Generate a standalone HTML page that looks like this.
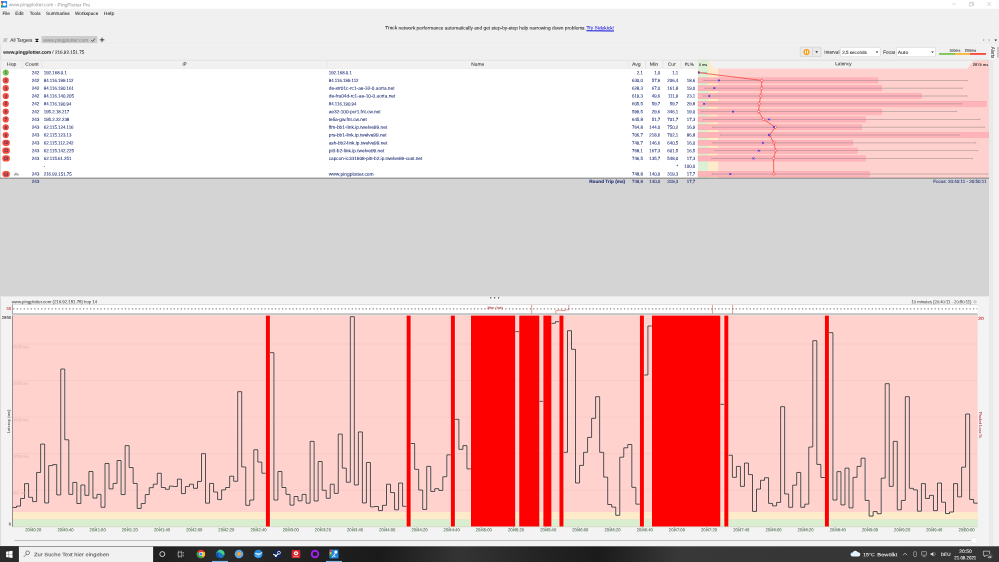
<!DOCTYPE html>
<html><head><meta charset="utf-8"><title>PingPlotter Pro</title><style>html,body{margin:0;padding:0}body{width:999px;height:562px;overflow:hidden;position:relative;background:#f0f0f0;font-family:"Liberation Sans",sans-serif}#tx{will-change:transform;opacity:.999}.t{position:absolute;left:0;top:0;-webkit-text-stroke:0.05px;white-space:nowrap;line-height:1;transform-origin:0 0;display:block}svg{position:absolute;left:0;top:0}</style></head><body>
<svg width="999" height="562" viewBox="0 0 999 562">
<rect x="0.00" y="0.00" width="999.00" height="562.00" fill="#f0f0f0" />
<rect x="0.00" y="0.00" width="999.00" height="8.70" fill="#ffffff" />
<rect x="1.00" y="1.10" width="6.10" height="6.40" fill="#1e88e5" />
<rect x="1.00" y="1.10" width="1.30" height="2.20" fill="#e53935" />
<rect x="1.00" y="3.30" width="1.30" height="2.10" fill="#fbc02d" />
<rect x="1.00" y="5.40" width="1.30" height="2.10" fill="#43a047" />
<circle cx="4.5" cy="4.3" r="1.75" fill="#fff"/>
<line x1="952.20" y1="4.10" x2="955.80" y2="4.10" stroke="#a8a8a8" stroke-width="0.45" />
<rect x="969.7" y="3" width="3" height="3" fill="none" stroke="#a8a8a8" stroke-width="0.45"/><path d="M970.6 3V2.2h3v3h-.9" fill="none" stroke="#a8a8a8" stroke-width="0.45"/>
<path d="M987.3 2l3.8 3.8M991.1 2l-3.8 3.8" stroke="#a8a8a8" stroke-width="0.45" fill="none"/>
<rect x="41.50" y="36.00" width="55.80" height="7.40" fill="#cdcdcd" />
<path d="M3.9 38.8h3.6M3.5 40h3.6M3.1 41.2h3.6" stroke="#8c8c8c" stroke-width="0.6"/>
<path d="M35.6 38.8l2.7 2.7M38.3 38.8l-2.7 2.7" stroke="#0a0a0a" stroke-width="1.1"/>
<path d="M91.3 40.2l1.3 1.3l2.3-2.9" stroke="#4a4a4a" stroke-width="0.95" fill="none"/>
<path d="M99.75 39.85h4.6M102.05 37.55v4.6" stroke="#0a0a0a" stroke-width="0.72"/>
<path d="M984.2 39l-1 1.1l1 1.1M988.6 39l1 1.1l-1 1.1" stroke="#858585" stroke-width="0.6" fill="none"/><path d="M994.4 39.6h2.8l-1.4 1.6z" fill="#333"/>
<rect x="0.00" y="43.30" width="999.00" height="0.90" fill="#fafafa" />
<line x1="0.00" y1="43.30" x2="999.00" y2="43.30" stroke="#dcdcdc" stroke-width="0.4" />
<rect x="0.00" y="44.20" width="1.20" height="16.00" fill="#e2e2e2" />
<rect x="800.3" y="47.3" width="20.7" height="9.2" rx="0.8" fill="#e9e9e9" stroke="#c4c4c4" stroke-width="0.45"/>
<line x1="812.50" y1="47.30" x2="812.50" y2="56.50" stroke="#c4c4c4" stroke-width="0.45" />
<circle cx="806.5" cy="52.1" r="3.1" fill="#f7a11a"/><path d="M805.5 50.5v3.2M807.5 50.5v3.2" stroke="#fff" stroke-width="0.8"/>
<path d="M815.4 51.3h2.6l-1.3 1.6z" fill="#222"/>
<rect x="840.4" y="47.4" width="39.9" height="9.3" rx="0.8" fill="#fff" stroke="#c9c9c9" stroke-width="0.45"/>
<path d="M875.7 51.5h2.6l-1.3 1.6z" fill="#222"/>
<rect x="896.5" y="47.4" width="39" height="9.3" rx="0.8" fill="#fff" stroke="#c9c9c9" stroke-width="0.45"/>
<path d="M931.2 51.5h2.6l-1.3 1.6z" fill="#222"/>
<rect x="939.00" y="53.00" width="16.00" height="1.90" fill="#80c656" />
<rect x="955.00" y="53.00" width="15.00" height="1.90" fill="#fab93e" />
<rect x="970.00" y="53.00" width="16.00" height="1.90" fill="#f5503f" />
<rect x="989.60" y="46.40" width="6.60" height="12.60" fill="#f8f8f8" />
<rect x="997.00" y="47.00" width="2.00" height="10.50" fill="#c8c8c8" />
<rect x="0.00" y="60.20" width="999.00" height="8.40" fill="#f1f1f1" />
<line x1="0.00" y1="60.20" x2="989.00" y2="60.20" stroke="#d6d6d6" stroke-width="0.5" />
<line x1="0.00" y1="68.50" x2="989.00" y2="68.50" stroke="#dadada" stroke-width="0.5" />
<rect x="0.00" y="68.60" width="698.00" height="109.40" fill="#ffffff" />
<rect x="0.00" y="68.60" width="1.20" height="109.40" fill="#dedede" />
<line x1="1.00" y1="60.60" x2="1.00" y2="68.30" stroke="#dcdcdc" stroke-width="0.5" />
<line x1="22.40" y1="60.60" x2="22.40" y2="68.30" stroke="#dcdcdc" stroke-width="0.5" />
<line x1="41.80" y1="60.60" x2="41.80" y2="68.30" stroke="#dcdcdc" stroke-width="0.5" />
<line x1="327.00" y1="60.60" x2="327.00" y2="68.30" stroke="#dcdcdc" stroke-width="0.5" />
<line x1="628.70" y1="60.60" x2="628.70" y2="68.30" stroke="#dcdcdc" stroke-width="0.5" />
<line x1="645.50" y1="60.60" x2="645.50" y2="68.30" stroke="#dcdcdc" stroke-width="0.5" />
<line x1="663.00" y1="60.60" x2="663.00" y2="68.30" stroke="#dcdcdc" stroke-width="0.5" />
<line x1="680.80" y1="60.60" x2="680.80" y2="68.30" stroke="#dcdcdc" stroke-width="0.5" />
<rect x="698.00" y="60.60" width="291.00" height="117.40" fill="#ffd1ce" />
<rect x="698.00" y="60.60" width="10.10" height="117.40" fill="#dbf0d4" />
<rect x="708.10" y="60.60" width="10.10" height="117.40" fill="#fdebc9" />
<path d="M708.3 60.6H973.5L967.2 68.5H714L708.3 60.6z" fill="#f1f1f1"/>
<line x1="698.00" y1="60.20" x2="989.00" y2="60.20" stroke="#d6d6d6" stroke-width="0.5" />
<rect x="698.00" y="77.81" width="179.92" height="5.2" fill="#ffb4bc" stroke="#fb9f9c" stroke-width="0.4"/>
<rect x="698.00" y="85.61" width="183.79" height="5.2" fill="#ffb4bc" stroke="#fb9f9c" stroke-width="0.4"/>
<rect x="698.00" y="93.41" width="223.45" height="5.2" fill="#ffb4bc" stroke="#fb9f9c" stroke-width="0.4"/>
<rect x="698.00" y="101.22" width="288.27" height="5.2" fill="#ffb4bc" stroke="#fb9f9c" stroke-width="0.4"/>
<rect x="698.00" y="109.03" width="183.79" height="5.2" fill="#ffb4bc" stroke="#fb9f9c" stroke-width="0.4"/>
<rect x="698.00" y="116.83" width="167.35" height="5.2" fill="#ffb4bc" stroke="#fb9f9c" stroke-width="0.4"/>
<rect x="698.00" y="124.63" width="163.48" height="5.2" fill="#ffb4bc" stroke="#fb9f9c" stroke-width="0.4"/>
<rect x="698.00" y="132.44" width="291.00" height="5.2" fill="#ffb4bc" stroke="#fb9f9c" stroke-width="0.4"/>
<rect x="698.00" y="140.25" width="154.77" height="5.2" fill="#ffb4bc" stroke="#fb9f9c" stroke-width="0.4"/>
<rect x="698.00" y="148.05" width="159.61" height="5.2" fill="#ffb4bc" stroke="#fb9f9c" stroke-width="0.4"/>
<rect x="698.00" y="155.85" width="167.35" height="5.2" fill="#ffb4bc" stroke="#fb9f9c" stroke-width="0.4"/>
<rect x="698.00" y="171.47" width="171.22" height="5.2" fill="#ffb4bc" stroke="#fb9f9c" stroke-width="0.4"/>
<circle cx="5.75" cy="72.60" r="3.1" fill="#7ec658"/>
<line x1="698.10" y1="72.60" x2="706.30" y2="72.60" stroke="#857878" stroke-width="0.5" opacity="0.9"/>
<line x1="698.10" y1="71.90" x2="698.10" y2="73.30" stroke="#7d7d7d" stroke-width="0.45" opacity="0.8"/>
<line x1="706.30" y1="71.90" x2="706.30" y2="73.30" stroke="#7d7d7d" stroke-width="0.45" opacity="0.8"/>
<circle cx="5.75" cy="80.41" r="3.1" fill="#f24f3d"/>
<line x1="703.86" y1="80.41" x2="967.40" y2="80.41" stroke="#857878" stroke-width="0.5" opacity="0.9"/>
<line x1="703.86" y1="79.70" x2="703.86" y2="81.11" stroke="#7d7d7d" stroke-width="0.45" opacity="0.8"/>
<line x1="967.40" y1="79.70" x2="967.40" y2="81.11" stroke="#7d7d7d" stroke-width="0.45" opacity="0.8"/>
<circle cx="5.75" cy="88.21" r="3.1" fill="#f24f3d"/>
<line x1="704.78" y1="88.21" x2="962.60" y2="88.21" stroke="#857878" stroke-width="0.5" opacity="0.9"/>
<line x1="704.78" y1="87.51" x2="704.78" y2="88.91" stroke="#7d7d7d" stroke-width="0.45" opacity="0.8"/>
<line x1="962.60" y1="87.51" x2="962.60" y2="88.91" stroke="#7d7d7d" stroke-width="0.45" opacity="0.8"/>
<circle cx="5.75" cy="96.01" r="3.1" fill="#f24f3d"/>
<line x1="703.02" y1="96.01" x2="967.00" y2="96.01" stroke="#857878" stroke-width="0.5" opacity="0.9"/>
<line x1="703.02" y1="95.31" x2="703.02" y2="96.71" stroke="#7d7d7d" stroke-width="0.45" opacity="0.8"/>
<line x1="967.00" y1="95.31" x2="967.00" y2="96.71" stroke="#7d7d7d" stroke-width="0.45" opacity="0.8"/>
<circle cx="5.75" cy="103.82" r="3.1" fill="#f24f3d"/>
<line x1="704.04" y1="103.82" x2="961.90" y2="103.82" stroke="#857878" stroke-width="0.5" opacity="0.9"/>
<line x1="704.04" y1="103.12" x2="704.04" y2="104.52" stroke="#7d7d7d" stroke-width="0.45" opacity="0.8"/>
<line x1="961.90" y1="103.12" x2="961.90" y2="104.52" stroke="#7d7d7d" stroke-width="0.45" opacity="0.8"/>
<circle cx="5.75" cy="111.62" r="3.1" fill="#f24f3d"/>
<line x1="701.00" y1="111.62" x2="956.60" y2="111.62" stroke="#857878" stroke-width="0.5" opacity="0.9"/>
<line x1="701.00" y1="110.92" x2="701.00" y2="112.33" stroke="#7d7d7d" stroke-width="0.45" opacity="0.8"/>
<line x1="956.60" y1="110.92" x2="956.60" y2="112.33" stroke="#7d7d7d" stroke-width="0.45" opacity="0.8"/>
<circle cx="5.75" cy="119.43" r="3.1" fill="#f24f3d"/>
<line x1="703.23" y1="119.43" x2="980.00" y2="119.43" stroke="#857878" stroke-width="0.5" opacity="0.9"/>
<line x1="703.23" y1="118.73" x2="703.23" y2="120.13" stroke="#7d7d7d" stroke-width="0.45" opacity="0.8"/>
<line x1="980.00" y1="118.73" x2="980.00" y2="120.13" stroke="#7d7d7d" stroke-width="0.45" opacity="0.8"/>
<circle cx="5.75" cy="127.23" r="3.1" fill="#f24f3d"/>
<line x1="712.58" y1="127.23" x2="984.70" y2="127.23" stroke="#857878" stroke-width="0.5" opacity="0.9"/>
<line x1="712.58" y1="126.53" x2="712.58" y2="127.93" stroke="#7d7d7d" stroke-width="0.45" opacity="0.8"/>
<line x1="984.70" y1="126.53" x2="984.70" y2="127.93" stroke="#7d7d7d" stroke-width="0.45" opacity="0.8"/>
<circle cx="5.75" cy="135.04" r="3.1" fill="#f24f3d"/>
<line x1="720.13" y1="135.04" x2="959.00" y2="135.04" stroke="#857878" stroke-width="0.5" opacity="0.9"/>
<line x1="720.13" y1="134.34" x2="720.13" y2="135.74" stroke="#7d7d7d" stroke-width="0.45" opacity="0.8"/>
<line x1="959.00" y1="134.34" x2="959.00" y2="135.74" stroke="#7d7d7d" stroke-width="0.45" opacity="0.8"/>
<rect x="2.3" y="139.75" width="7.6" height="6.2" rx="3.1" fill="#f24f3d"/>
<line x1="712.84" y1="142.84" x2="975.80" y2="142.84" stroke="#857878" stroke-width="0.5" opacity="0.9"/>
<line x1="712.84" y1="142.15" x2="712.84" y2="143.54" stroke="#7d7d7d" stroke-width="0.45" opacity="0.8"/>
<line x1="975.80" y1="142.15" x2="975.80" y2="143.54" stroke="#7d7d7d" stroke-width="0.45" opacity="0.8"/>
<rect x="2.3" y="147.55" width="7.6" height="6.2" rx="3.1" fill="#f24f3d"/>
<line x1="714.93" y1="150.65" x2="977.50" y2="150.65" stroke="#857878" stroke-width="0.5" opacity="0.9"/>
<line x1="714.93" y1="149.95" x2="714.93" y2="151.35" stroke="#7d7d7d" stroke-width="0.45" opacity="0.8"/>
<line x1="977.50" y1="149.95" x2="977.50" y2="151.35" stroke="#7d7d7d" stroke-width="0.45" opacity="0.8"/>
<rect x="2.3" y="155.35" width="7.6" height="6.2" rx="3.1" fill="#f24f3d"/>
<line x1="711.74" y1="158.45" x2="972.70" y2="158.45" stroke="#857878" stroke-width="0.5" opacity="0.9"/>
<line x1="711.74" y1="157.75" x2="711.74" y2="159.15" stroke="#7d7d7d" stroke-width="0.45" opacity="0.8"/>
<line x1="972.70" y1="157.75" x2="972.70" y2="159.15" stroke="#7d7d7d" stroke-width="0.45" opacity="0.8"/>
<rect x="2.3" y="170.97" width="7.6" height="6.2" rx="3.1" fill="#f24f3d"/>
<line x1="712.17" y1="174.06" x2="987.80" y2="174.06" stroke="#857878" stroke-width="0.5" opacity="0.9"/>
<line x1="712.17" y1="173.37" x2="712.17" y2="174.76" stroke="#7d7d7d" stroke-width="0.45" opacity="0.8"/>
<line x1="987.80" y1="173.37" x2="987.80" y2="174.76" stroke="#7d7d7d" stroke-width="0.45" opacity="0.8"/>
<polyline points="698.21,72.60 761.77,80.41 761.59,88.21 760.68,96.01 759.29,103.82 758.68,111.62 763.37,119.43 775.41,127.23 769.53,135.04 773.88,142.84 775.75,150.65 773.56,158.45 773.79,174.06" fill="none" stroke="#f4504a" stroke-width="0.85" stroke-linejoin="round"/>
<rect x="698.1" y="71.75" width="1.7" height="1.7" fill="#2b45e8" stroke="#e84040" stroke-width="0.35"/>
<circle cx="761.77" cy="80.41" r="1.2" fill="#ffe3e1" stroke="#ee2f2f" stroke-width="0.55"/>
<rect x="718.29" y="79.81" width="1.2" height="1.2" fill="#2a22e0"/><path d="M717.84 79.36l2.1 2.1M719.94 79.36l-2.1 2.1" stroke="#3a30e6" stroke-width="0.6"/>
<circle cx="761.59" cy="88.21" r="1.2" fill="#ffe3e1" stroke="#ee2f2f" stroke-width="0.55"/>
<rect x="713.78" y="87.61" width="1.2" height="1.2" fill="#2a22e0"/><path d="M713.33 87.16l2.1 2.1M715.43 87.16l-2.1 2.1" stroke="#3a30e6" stroke-width="0.6"/>
<circle cx="760.68" cy="96.01" r="1.2" fill="#ffe3e1" stroke="#ee2f2f" stroke-width="0.55"/>
<rect x="708.73" y="95.41" width="1.2" height="1.2" fill="#2a22e0"/><path d="M708.28 94.96l2.1 2.1M710.38 94.96l-2.1 2.1" stroke="#3a30e6" stroke-width="0.6"/>
<circle cx="759.29" cy="103.82" r="1.2" fill="#ffe3e1" stroke="#ee2f2f" stroke-width="0.55"/>
<rect x="703.44" y="103.22" width="1.2" height="1.2" fill="#2a22e0"/><path d="M702.99 102.77l2.1 2.1M705.09 102.77l-2.1 2.1" stroke="#3a30e6" stroke-width="0.6"/>
<circle cx="758.68" cy="111.62" r="1.2" fill="#ffe3e1" stroke="#ee2f2f" stroke-width="0.55"/>
<rect x="732.43" y="111.03" width="1.2" height="1.2" fill="#2a22e0"/><path d="M731.98 110.58l2.1 2.1M734.08 110.58l-2.1 2.1" stroke="#3a30e6" stroke-width="0.6"/>
<circle cx="763.37" cy="119.43" r="1.2" fill="#ffe3e1" stroke="#ee2f2f" stroke-width="0.55"/>
<rect x="768.42" y="118.83" width="1.2" height="1.2" fill="#2a22e0"/><path d="M767.97 118.38l2.1 2.1M770.07 118.38l-2.1 2.1" stroke="#3a30e6" stroke-width="0.6"/>
<circle cx="775.41" cy="127.23" r="1.2" fill="#ffe3e1" stroke="#ee2f2f" stroke-width="0.55"/>
<rect x="773.33" y="126.63" width="1.2" height="1.2" fill="#2a22e0"/><path d="M772.88 126.18l2.1 2.1M774.98 126.18l-2.1 2.1" stroke="#3a30e6" stroke-width="0.6"/>
<circle cx="769.53" cy="135.04" r="1.2" fill="#ffe3e1" stroke="#ee2f2f" stroke-width="0.55"/>
<rect x="768.46" y="134.44" width="1.2" height="1.2" fill="#2a22e0"/><path d="M768.01 133.99l2.1 2.1M770.11 133.99l-2.1 2.1" stroke="#3a30e6" stroke-width="0.6"/>
<circle cx="773.88" cy="142.84" r="1.2" fill="#ffe3e1" stroke="#ee2f2f" stroke-width="0.55"/>
<rect x="762.23" y="142.25" width="1.2" height="1.2" fill="#2a22e0"/><path d="M761.78 141.79l2.1 2.1M763.88 141.79l-2.1 2.1" stroke="#3a30e6" stroke-width="0.6"/>
<circle cx="775.75" cy="150.65" r="1.2" fill="#ffe3e1" stroke="#ee2f2f" stroke-width="0.55"/>
<rect x="758.28" y="150.05" width="1.2" height="1.2" fill="#2a22e0"/><path d="M757.83 149.60l2.1 2.1M759.93 149.60l-2.1 2.1" stroke="#3a30e6" stroke-width="0.6"/>
<circle cx="773.56" cy="158.45" r="1.2" fill="#ffe3e1" stroke="#ee2f2f" stroke-width="0.55"/>
<rect x="752.87" y="157.85" width="1.2" height="1.2" fill="#2a22e0"/><path d="M752.42 157.40l2.1 2.1M754.52 157.40l-2.1 2.1" stroke="#3a30e6" stroke-width="0.6"/>
<circle cx="773.79" cy="174.06" r="1.2" fill="#ffe3e1" stroke="#ee2f2f" stroke-width="0.55"/>
<rect x="729.72" y="173.47" width="1.2" height="1.2" fill="#2a22e0"/><path d="M729.27 173.01l2.1 2.1M731.37 173.01l-2.1 2.1" stroke="#3a30e6" stroke-width="0.6"/>
<path d="M14.6 175.37v-1.4M15.9 175.37v-2.8M17.2 175.37v-2M18.4 175.37v-1" stroke="#666" stroke-width="0.8"/>
<rect x="0.00" y="178.00" width="989.00" height="118.00" fill="#d4d4d4" />
<line x1="0.00" y1="178.15" x2="989.00" y2="178.15" stroke="#646464" stroke-width="0.8" />
<rect x="989.00" y="60.40" width="10.00" height="486.00" fill="#eaeaea" />
<rect x="993.50" y="60.40" width="5.50" height="486.00" fill="#f2f2f2" />
<rect x="0.00" y="296.00" width="989.00" height="1.30" fill="#e6e6e6" />
<rect x="0.00" y="296.90" width="989.00" height="249.50" fill="#f3f3f3" />
<rect x="0.00" y="296.90" width="1.10" height="249.50" fill="#dcdcdc" />
<rect x="490.10" y="297.20" width="1.20" height="1.20" fill="#444" />
<rect x="494.00" y="297.20" width="1.20" height="1.20" fill="#444" />
<rect x="498.00" y="297.20" width="1.20" height="1.20" fill="#444" />
<circle cx="975" cy="301.8" r="1.5" fill="#e4e4e4" stroke="#aaa" stroke-width="0.3"/><path d="M974.2 301.5l.8 .8l.8-.8" stroke="#666" stroke-width="0.35" fill="none"/>
<rect x="12.50" y="304.60" width="965.20" height="9.30" fill="#ffffff" />
<line x1="12.50" y1="304.50" x2="977.70" y2="304.50" stroke="#c4c4c4" stroke-width="0.5" />
<line x1="12.50" y1="314.00" x2="977.70" y2="314.00" stroke="#7a7a7a" stroke-width="0.75" />
<line x1="12.50" y1="304.40" x2="12.50" y2="314.30" stroke="#6a6a6a" stroke-width="0.6" />
<line x1="13.2" y1="308.8" x2="977.2" y2="308.8" stroke="#868686" stroke-width="1.15" stroke-dasharray="1.25 2.24"/>
<line x1="531.70" y1="305.00" x2="531.70" y2="313.70" stroke="#c83a3a" stroke-width="0.5" />
<line x1="712.40" y1="305.00" x2="712.40" y2="313.70" stroke="#c83a3a" stroke-width="0.5" />
<line x1="732.60" y1="305.00" x2="732.60" y2="313.70" stroke="#c83a3a" stroke-width="0.5" />
<path d="M555.8 313.7V310.6h2.6v-.5h3.2v.4h3.4v-.6h3.8V305" fill="none" stroke="#c83a3a" stroke-width="0.5"/>
<rect x="12.50" y="315.60" width="965.20" height="211.00" fill="#ffd2ce" />
<rect x="12.50" y="512.00" width="965.20" height="7.30" fill="#fdebca" />
<rect x="12.50" y="519.30" width="965.20" height="7.30" fill="#d9eed0" />
<line x1="12.50" y1="315.30" x2="977.70" y2="315.30" stroke="#e6c8c6" stroke-width="0.5" />
<line x1="12.50" y1="490.09" x2="977.70" y2="490.09" stroke="#eebfbb" stroke-width="0.4" />
<line x1="12.50" y1="453.59" x2="977.70" y2="453.59" stroke="#eebfbb" stroke-width="0.4" />
<line x1="12.50" y1="417.08" x2="977.70" y2="417.08" stroke="#eebfbb" stroke-width="0.4" />
<line x1="12.50" y1="380.58" x2="977.70" y2="380.58" stroke="#eebfbb" stroke-width="0.4" />
<line x1="12.50" y1="344.07" x2="977.70" y2="344.07" stroke="#eebfbb" stroke-width="0.4" />
<rect x="265.17" y="315.60" width="5.42" height="211.00" fill="#ffffff" opacity="0.55"/>
<rect x="265.87" y="315.60" width="4.02" height="211.00" fill="#fe0000" />
<rect x="405.92" y="315.60" width="5.42" height="211.00" fill="#ffffff" opacity="0.55"/>
<rect x="406.62" y="315.60" width="4.02" height="211.00" fill="#fe0000" />
<rect x="450.16" y="315.60" width="5.42" height="211.00" fill="#ffffff" opacity="0.55"/>
<rect x="450.86" y="315.60" width="4.02" height="211.00" fill="#fe0000" />
<rect x="470.27" y="315.60" width="45.64" height="211.00" fill="#ffffff" opacity="0.55"/>
<rect x="470.97" y="315.60" width="44.24" height="211.00" fill="#fe0000" />
<rect x="518.53" y="315.60" width="21.51" height="211.00" fill="#ffffff" opacity="0.55"/>
<rect x="519.23" y="315.60" width="20.11" height="211.00" fill="#fe0000" />
<rect x="542.66" y="315.60" width="9.44" height="211.00" fill="#ffffff" opacity="0.55"/>
<rect x="543.36" y="315.60" width="8.04" height="211.00" fill="#fe0000" />
<rect x="558.75" y="315.60" width="5.42" height="211.00" fill="#ffffff" opacity="0.55"/>
<rect x="559.45" y="315.60" width="4.02" height="211.00" fill="#fe0000" />
<rect x="639.18" y="315.60" width="5.42" height="211.00" fill="#ffffff" opacity="0.55"/>
<rect x="639.88" y="315.60" width="4.02" height="211.00" fill="#fe0000" />
<rect x="651.24" y="315.60" width="69.77" height="211.00" fill="#ffffff" opacity="0.55"/>
<rect x="651.94" y="315.60" width="68.37" height="211.00" fill="#fe0000" />
<rect x="723.63" y="315.60" width="5.42" height="211.00" fill="#ffffff" opacity="0.55"/>
<rect x="724.33" y="315.60" width="4.02" height="211.00" fill="#fe0000" />
<rect x="824.18" y="315.60" width="5.42" height="211.00" fill="#ffffff" opacity="0.55"/>
<rect x="824.88" y="315.60" width="4.02" height="211.00" fill="#fe0000" />
<path d="M12.50 507.48 L16.52 507.48 L16.52 506.11 L20.54 506.11 L20.54 498.47 L24.56 498.47 L24.56 483.60 L28.59 483.60 L28.59 497.30 L32.61 497.30 L32.61 501.60 L36.63 501.60 L36.63 472.45 L40.65 472.45 L40.65 444.07 L44.67 444.07 L44.67 502.97 L48.70 502.97 L48.70 465.60 L52.72 465.60 L52.72 464.62 L56.74 464.62 L56.74 494.95 L60.76 494.95 L60.76 369.00 L64.78 369.00 L64.78 439.77 L68.80 439.77 L68.80 494.36 L72.82 494.36 L72.82 482.43 L76.85 482.43 L76.85 503.56 L80.87 503.56 L80.87 484.97 L84.89 484.97 L84.89 495.34 L88.91 495.34 L88.91 471.47 L92.93 471.47 L92.93 498.08 L96.95 498.08 L96.95 494.36 L100.98 494.36 L100.98 507.28 L105.00 507.28 L105.00 463.44 L109.02 463.44 L109.02 488.88 L113.04 488.88 L113.04 483.41 L117.06 483.41 L117.06 460.51 L121.08 460.51 L121.08 494.56 L125.11 494.56 L125.11 445.64 L129.13 445.64 L129.13 467.55 L133.15 467.55 L133.15 483.41 L137.17 483.41 L137.17 508.45 L141.19 508.45 L141.19 503.56 L145.22 503.56 L145.22 494.56 L149.24 494.56 L149.24 487.71 L153.26 487.71 L153.26 484.19 L157.28 484.19 L157.28 473.23 L161.30 473.23 L161.30 487.51 L165.32 487.51 L165.32 489.28 L169.34 489.28 L169.34 486.14 L173.37 486.14 L173.37 486.54 L177.39 486.54 L177.39 479.10 L181.41 479.10 L181.41 493.58 L185.43 493.58 L185.43 486.54 L189.45 486.54 L189.45 484.19 L193.47 484.19 L193.47 488.30 L197.50 488.30 L197.50 481.45 L201.52 481.45 L201.52 453.66 L205.54 453.66 L205.54 503.17 L209.56 503.17 L209.56 483.41 L213.58 483.41 L213.58 492.02 L217.60 492.02 L217.60 499.65 L221.63 499.65 L221.63 489.86 L225.65 489.86 L225.65 487.51 L229.67 487.51 L229.67 476.16 L233.69 476.16 L233.69 481.25 L237.71 481.25 L237.71 391.70 L241.73 391.70 L241.73 466.97 L245.76 466.97 L245.76 505.32 L249.78 505.32 L249.78 500.04 L253.80 500.04 L253.80 449.75 L257.82 449.75 L257.82 462.07 L261.84 462.07 L261.84 473.23 L265.87 473.23" fill="none" stroke="#fff" stroke-width="1.5" stroke-opacity="0.5" stroke-linejoin="miter"/>
<path d="M12.50 507.48 L16.52 507.48 L16.52 506.11 L20.54 506.11 L20.54 498.47 L24.56 498.47 L24.56 483.60 L28.59 483.60 L28.59 497.30 L32.61 497.30 L32.61 501.60 L36.63 501.60 L36.63 472.45 L40.65 472.45 L40.65 444.07 L44.67 444.07 L44.67 502.97 L48.70 502.97 L48.70 465.60 L52.72 465.60 L52.72 464.62 L56.74 464.62 L56.74 494.95 L60.76 494.95 L60.76 369.00 L64.78 369.00 L64.78 439.77 L68.80 439.77 L68.80 494.36 L72.82 494.36 L72.82 482.43 L76.85 482.43 L76.85 503.56 L80.87 503.56 L80.87 484.97 L84.89 484.97 L84.89 495.34 L88.91 495.34 L88.91 471.47 L92.93 471.47 L92.93 498.08 L96.95 498.08 L96.95 494.36 L100.98 494.36 L100.98 507.28 L105.00 507.28 L105.00 463.44 L109.02 463.44 L109.02 488.88 L113.04 488.88 L113.04 483.41 L117.06 483.41 L117.06 460.51 L121.08 460.51 L121.08 494.56 L125.11 494.56 L125.11 445.64 L129.13 445.64 L129.13 467.55 L133.15 467.55 L133.15 483.41 L137.17 483.41 L137.17 508.45 L141.19 508.45 L141.19 503.56 L145.22 503.56 L145.22 494.56 L149.24 494.56 L149.24 487.71 L153.26 487.71 L153.26 484.19 L157.28 484.19 L157.28 473.23 L161.30 473.23 L161.30 487.51 L165.32 487.51 L165.32 489.28 L169.34 489.28 L169.34 486.14 L173.37 486.14 L173.37 486.54 L177.39 486.54 L177.39 479.10 L181.41 479.10 L181.41 493.58 L185.43 493.58 L185.43 486.54 L189.45 486.54 L189.45 484.19 L193.47 484.19 L193.47 488.30 L197.50 488.30 L197.50 481.45 L201.52 481.45 L201.52 453.66 L205.54 453.66 L205.54 503.17 L209.56 503.17 L209.56 483.41 L213.58 483.41 L213.58 492.02 L217.60 492.02 L217.60 499.65 L221.63 499.65 L221.63 489.86 L225.65 489.86 L225.65 487.51 L229.67 487.51 L229.67 476.16 L233.69 476.16 L233.69 481.25 L237.71 481.25 L237.71 391.70 L241.73 391.70 L241.73 466.97 L245.76 466.97 L245.76 505.32 L249.78 505.32 L249.78 500.04 L253.80 500.04 L253.80 449.75 L257.82 449.75 L257.82 462.07 L261.84 462.07 L261.84 473.23 L265.87 473.23" fill="none" stroke="#1e1919" stroke-width="0.78" stroke-linejoin="miter"/>
<path d="M269.89 352.70 L273.91 352.70 L273.91 500.04 L277.93 500.04 L277.93 471.47 L281.95 471.47 L281.95 487.51 L285.97 487.51 L285.97 494.36 L289.99 494.36 L290.00 505.13 L294.02 505.13 L294.02 496.52 L298.04 496.52 L298.04 500.82 L302.06 500.82 L302.06 494.36 L306.08 494.36 L306.08 503.17 L310.10 503.17 L310.10 441.33 L314.12 441.33 L314.12 501.02 L318.15 501.02 L318.15 461.49 L322.17 461.49 L322.17 490.25 L326.19 490.25 L326.19 498.28 L330.21 498.28 L330.21 484.19 L334.23 484.19 L334.23 493.39 L338.25 493.39 L338.25 434.09 L342.28 434.09 L342.28 468.14 L346.30 468.14 L346.30 482.23 L350.32 482.23 L350.32 316.70 L354.34 316.70 L354.34 484.97 L358.36 484.97 L358.36 431.94 L362.38 431.94 L362.38 502.97 L366.41 502.97 L366.41 462.47 L370.43 462.47 L370.43 506.89 L374.45 506.89 L374.45 506.50 L378.47 506.50 L378.47 510.61 L382.49 510.61 L382.49 505.32 L386.51 505.32 L386.51 484.19 L390.54 484.19 L390.54 492.60 L394.56 492.60 L394.56 509.82 L398.58 509.82 L398.58 483.01 L402.60 483.01 L402.60 506.30 L406.62 506.30" fill="none" stroke="#fff" stroke-width="1.5" stroke-opacity="0.5" stroke-linejoin="miter"/>
<path d="M269.89 352.70 L273.91 352.70 L273.91 500.04 L277.93 500.04 L277.93 471.47 L281.95 471.47 L281.95 487.51 L285.97 487.51 L285.97 494.36 L289.99 494.36 L290.00 505.13 L294.02 505.13 L294.02 496.52 L298.04 496.52 L298.04 500.82 L302.06 500.82 L302.06 494.36 L306.08 494.36 L306.08 503.17 L310.10 503.17 L310.10 441.33 L314.12 441.33 L314.12 501.02 L318.15 501.02 L318.15 461.49 L322.17 461.49 L322.17 490.25 L326.19 490.25 L326.19 498.28 L330.21 498.28 L330.21 484.19 L334.23 484.19 L334.23 493.39 L338.25 493.39 L338.25 434.09 L342.28 434.09 L342.28 468.14 L346.30 468.14 L346.30 482.23 L350.32 482.23 L350.32 316.70 L354.34 316.70 L354.34 484.97 L358.36 484.97 L358.36 431.94 L362.38 431.94 L362.38 502.97 L366.41 502.97 L366.41 462.47 L370.43 462.47 L370.43 506.89 L374.45 506.89 L374.45 506.50 L378.47 506.50 L378.47 510.61 L382.49 510.61 L382.49 505.32 L386.51 505.32 L386.51 484.19 L390.54 484.19 L390.54 492.60 L394.56 492.60 L394.56 509.82 L398.58 509.82 L398.58 483.01 L402.60 483.01 L402.60 506.30 L406.62 506.30" fill="none" stroke="#1e1919" stroke-width="0.78" stroke-linejoin="miter"/>
<path d="M410.64 443.48 L414.67 443.48 L414.67 469.32 L418.69 469.32 L418.69 490.06 L422.71 490.06 L422.71 509.43 L426.73 509.43 L426.73 466.38 L430.75 466.38 L430.75 491.43 L434.77 491.43 L434.77 488.69 L438.80 488.69 L438.80 490.45 L442.82 490.45 L442.82 476.75 L446.84 476.75 L446.84 454.83 L450.86 454.83" fill="none" stroke="#fff" stroke-width="1.5" stroke-opacity="0.5" stroke-linejoin="miter"/>
<path d="M410.64 443.48 L414.67 443.48 L414.67 469.32 L418.69 469.32 L418.69 490.06 L422.71 490.06 L422.71 509.43 L426.73 509.43 L426.73 466.38 L430.75 466.38 L430.75 491.43 L434.77 491.43 L434.77 488.69 L438.80 488.69 L438.80 490.45 L442.82 490.45 L442.82 476.75 L446.84 476.75 L446.84 454.83 L450.86 454.83" fill="none" stroke="#1e1919" stroke-width="0.78" stroke-linejoin="miter"/>
<path d="M454.88 419.30 L458.90 419.30 L458.90 449.35 L462.93 449.35 L462.93 445.64 L466.95 445.64 L466.95 468.92 L470.97 468.92" fill="none" stroke="#fff" stroke-width="1.5" stroke-opacity="0.5" stroke-linejoin="miter"/>
<path d="M454.88 419.30 L458.90 419.30 L458.90 449.35 L462.93 449.35 L462.93 445.64 L466.95 445.64 L466.95 468.92 L470.97 468.92" fill="none" stroke="#1e1919" stroke-width="0.78" stroke-linejoin="miter"/>
<path d="M515.21 331.70 L519.23 331.70" fill="none" stroke="#fff" stroke-width="1.5" stroke-opacity="0.5" stroke-linejoin="miter"/>
<path d="M515.21 331.70 L519.23 331.70" fill="none" stroke="#1e1919" stroke-width="0.78" stroke-linejoin="miter"/>
<path d="M539.34 401.30 L543.36 401.30" fill="none" stroke="#fff" stroke-width="1.5" stroke-opacity="0.5" stroke-linejoin="miter"/>
<path d="M539.34 401.30 L543.36 401.30" fill="none" stroke="#1e1919" stroke-width="0.78" stroke-linejoin="miter"/>
<path d="M551.40 323.30 L555.42 323.30 L555.42 321.70 L559.45 321.70" fill="none" stroke="#fff" stroke-width="1.5" stroke-opacity="0.5" stroke-linejoin="miter"/>
<path d="M551.40 323.30 L555.42 323.30 L555.42 321.70 L559.45 321.70" fill="none" stroke="#1e1919" stroke-width="0.78" stroke-linejoin="miter"/>
<path d="M563.47 452.29 L567.49 452.29 L567.49 330.70 L571.51 330.70 L571.51 349.30 L575.53 349.30 L575.53 483.01 L579.55 483.01 L579.55 465.40 L583.58 465.40 L583.58 452.29 L587.60 452.29 L587.60 437.42 L591.62 437.42 L591.62 418.30 L595.64 418.30 L595.64 396.70 L599.66 396.70 L599.66 452.29 L603.68 452.29 L603.68 477.14 L607.71 477.14 L607.71 504.54 L611.73 504.54 L611.73 507.08 L615.75 507.08 L615.75 515.30 L619.77 515.30 L619.77 457.18 L623.79 457.18 L623.79 447.79 L627.81 447.79 L627.81 444.46 L631.84 444.46 L631.84 487.32 L635.86 487.32 L635.86 504.15 L639.88 504.15" fill="none" stroke="#fff" stroke-width="1.5" stroke-opacity="0.5" stroke-linejoin="miter"/>
<path d="M563.47 452.29 L567.49 452.29 L567.49 330.70 L571.51 330.70 L571.51 349.30 L575.53 349.30 L575.53 483.01 L579.55 483.01 L579.55 465.40 L583.58 465.40 L583.58 452.29 L587.60 452.29 L587.60 437.42 L591.62 437.42 L591.62 418.30 L595.64 418.30 L595.64 396.70 L599.66 396.70 L599.66 452.29 L603.68 452.29 L603.68 477.14 L607.71 477.14 L607.71 504.54 L611.73 504.54 L611.73 507.08 L615.75 507.08 L615.75 515.30 L619.77 515.30 L619.77 457.18 L623.79 457.18 L623.79 447.79 L627.81 447.79 L627.81 444.46 L631.84 444.46 L631.84 487.32 L635.86 487.32 L635.86 504.15 L639.88 504.15" fill="none" stroke="#1e1919" stroke-width="0.78" stroke-linejoin="miter"/>
<path d="M643.90 375.00 L647.92 375.00 L647.92 326.00 L651.94 326.00" fill="none" stroke="#fff" stroke-width="1.5" stroke-opacity="0.5" stroke-linejoin="miter"/>
<path d="M643.90 375.00 L647.92 375.00 L647.92 326.00 L651.94 326.00" fill="none" stroke="#1e1919" stroke-width="0.78" stroke-linejoin="miter"/>
<path d="M720.31 404.30 L724.33 404.30" fill="none" stroke="#fff" stroke-width="1.5" stroke-opacity="0.5" stroke-linejoin="miter"/>
<path d="M720.31 404.30 L724.33 404.30" fill="none" stroke="#1e1919" stroke-width="0.78" stroke-linejoin="miter"/>
<path d="M728.36 455.23 L732.38 455.23 L732.38 477.34 L736.40 477.34 L736.40 466.38 L740.42 466.38 L740.42 486.34 L744.44 486.34 L744.44 463.05 L748.46 463.05 L748.46 474.60 L752.49 474.60 L752.49 511.39 L756.51 511.39 L756.51 489.08 L760.53 489.08 L760.53 480.27 L764.55 480.27 L764.55 477.73 L768.57 477.73 L768.57 503.37 L772.59 503.37 L772.59 505.91 L776.62 505.91 L776.62 502.39 L780.64 502.39 L780.64 406.70 L784.66 406.70 L784.66 493.97 L788.68 493.97 L788.68 507.28 L792.70 507.28 L792.70 485.17 L796.72 485.17 L796.73 472.45 L800.75 472.45 L800.75 507.28 L804.77 507.28 L804.77 504.15 L808.79 504.15 L808.79 447.01 L812.81 447.01 L812.81 340.70 L816.83 340.70 L816.83 464.42 L820.85 464.42 L820.86 477.53 L824.88 477.53" fill="none" stroke="#fff" stroke-width="1.5" stroke-opacity="0.5" stroke-linejoin="miter"/>
<path d="M728.36 455.23 L732.38 455.23 L732.38 477.34 L736.40 477.34 L736.40 466.38 L740.42 466.38 L740.42 486.34 L744.44 486.34 L744.44 463.05 L748.46 463.05 L748.46 474.60 L752.49 474.60 L752.49 511.39 L756.51 511.39 L756.51 489.08 L760.53 489.08 L760.53 480.27 L764.55 480.27 L764.55 477.73 L768.57 477.73 L768.57 503.37 L772.59 503.37 L772.59 505.91 L776.62 505.91 L776.62 502.39 L780.64 502.39 L780.64 406.70 L784.66 406.70 L784.66 493.97 L788.68 493.97 L788.68 507.28 L792.70 507.28 L792.70 485.17 L796.72 485.17 L796.73 472.45 L800.75 472.45 L800.75 507.28 L804.77 507.28 L804.77 504.15 L808.79 504.15 L808.79 447.01 L812.81 447.01 L812.81 340.70 L816.83 340.70 L816.83 464.42 L820.85 464.42 L820.86 477.53 L824.88 477.53" fill="none" stroke="#1e1919" stroke-width="0.78" stroke-linejoin="miter"/>
<path d="M828.90 332.70 L832.92 332.70 L832.92 500.04 L836.94 500.04 L836.94 471.66 L840.96 471.66 L840.96 504.93 L844.98 504.93 L844.99 468.14 L849.01 468.14 L849.01 507.87 L853.03 507.87 L853.03 477.34 L857.05 477.34 L857.05 466.38 L861.07 466.38 L861.07 458.16 L865.09 458.16 L865.09 500.43 L869.11 500.43 L869.12 516.09 L873.14 516.09 L873.14 511.59 L877.16 511.59 L877.16 513.74 L881.18 513.74 L881.18 478.12 L885.20 478.12 L885.20 383.70 L889.22 383.70 L889.22 486.34 L893.24 486.34 L893.25 441.33 L897.27 441.33 L897.27 509.82 L901.29 509.82 L901.29 500.43 L905.31 500.43 L905.31 396.70 L909.33 396.70 L909.33 488.30 L913.35 488.30 L913.35 489.86 L917.37 489.86 L917.38 511.19 L921.40 511.19 L921.40 483.60 L925.42 483.60 L925.42 498.47 L929.44 498.47 L929.44 495.34 L933.46 495.34 L933.46 510.61 L937.48 510.61 L937.48 483.01 L941.50 483.01 L941.50 502.19 L945.53 502.19 L945.53 513.54 L949.55 513.54 L949.55 511.98 L953.57 511.98 L953.57 483.60 L957.59 483.60 L957.59 496.91 L961.61 496.91 L961.61 467.16 L965.63 467.16 L965.63 414.00 L969.66 414.00 L969.66 499.45 L973.68 499.45 L973.68 503.17 L977.70 503.17" fill="none" stroke="#fff" stroke-width="1.5" stroke-opacity="0.5" stroke-linejoin="miter"/>
<path d="M828.90 332.70 L832.92 332.70 L832.92 500.04 L836.94 500.04 L836.94 471.66 L840.96 471.66 L840.96 504.93 L844.98 504.93 L844.99 468.14 L849.01 468.14 L849.01 507.87 L853.03 507.87 L853.03 477.34 L857.05 477.34 L857.05 466.38 L861.07 466.38 L861.07 458.16 L865.09 458.16 L865.09 500.43 L869.11 500.43 L869.12 516.09 L873.14 516.09 L873.14 511.59 L877.16 511.59 L877.16 513.74 L881.18 513.74 L881.18 478.12 L885.20 478.12 L885.20 383.70 L889.22 383.70 L889.22 486.34 L893.24 486.34 L893.25 441.33 L897.27 441.33 L897.27 509.82 L901.29 509.82 L901.29 500.43 L905.31 500.43 L905.31 396.70 L909.33 396.70 L909.33 488.30 L913.35 488.30 L913.35 489.86 L917.37 489.86 L917.38 511.19 L921.40 511.19 L921.40 483.60 L925.42 483.60 L925.42 498.47 L929.44 498.47 L929.44 495.34 L933.46 495.34 L933.46 510.61 L937.48 510.61 L937.48 483.01 L941.50 483.01 L941.50 502.19 L945.53 502.19 L945.53 513.54 L949.55 513.54 L949.55 511.98 L953.57 511.98 L953.57 483.60 L957.59 483.60 L957.59 496.91 L961.61 496.91 L961.61 467.16 L965.63 467.16 L965.63 414.00 L969.66 414.00 L969.66 499.45 L973.68 499.45 L973.68 503.17 L977.70 503.17" fill="none" stroke="#1e1919" stroke-width="0.78" stroke-linejoin="miter"/>
<line x1="12.50" y1="315.60" x2="12.50" y2="526.90" stroke="#555" stroke-width="0.6" />
<line x1="12.50" y1="526.80" x2="977.70" y2="526.80" stroke="#b9c9b0" stroke-width="0.4" />
<line x1="30.85" y1="527.00" x2="30.85" y2="531.30" stroke="#4a6a44" stroke-width="0.4" />
<line x1="63.03" y1="527.00" x2="63.03" y2="531.30" stroke="#4a6a44" stroke-width="0.4" />
<line x1="95.21" y1="527.00" x2="95.21" y2="531.30" stroke="#4a6a44" stroke-width="0.4" />
<line x1="127.39" y1="527.00" x2="127.39" y2="531.30" stroke="#4a6a44" stroke-width="0.4" />
<line x1="159.57" y1="527.00" x2="159.57" y2="531.30" stroke="#4a6a44" stroke-width="0.4" />
<line x1="191.75" y1="527.00" x2="191.75" y2="531.30" stroke="#4a6a44" stroke-width="0.4" />
<line x1="223.93" y1="527.00" x2="223.93" y2="531.30" stroke="#4a6a44" stroke-width="0.4" />
<line x1="256.11" y1="527.00" x2="256.11" y2="531.30" stroke="#4a6a44" stroke-width="0.4" />
<line x1="288.29" y1="527.00" x2="288.29" y2="531.30" stroke="#4a6a44" stroke-width="0.4" />
<line x1="320.47" y1="527.00" x2="320.47" y2="531.30" stroke="#4a6a44" stroke-width="0.4" />
<line x1="352.65" y1="527.00" x2="352.65" y2="531.30" stroke="#4a6a44" stroke-width="0.4" />
<line x1="384.83" y1="527.00" x2="384.83" y2="531.30" stroke="#4a6a44" stroke-width="0.4" />
<line x1="417.01" y1="527.00" x2="417.01" y2="531.30" stroke="#4a6a44" stroke-width="0.4" />
<line x1="449.19" y1="527.00" x2="449.19" y2="531.30" stroke="#4a6a44" stroke-width="0.4" />
<line x1="481.37" y1="527.00" x2="481.37" y2="531.30" stroke="#4a6a44" stroke-width="0.4" />
<line x1="513.55" y1="527.00" x2="513.55" y2="531.30" stroke="#4a6a44" stroke-width="0.4" />
<line x1="545.73" y1="527.00" x2="545.73" y2="531.30" stroke="#4a6a44" stroke-width="0.4" />
<line x1="577.91" y1="527.00" x2="577.91" y2="531.30" stroke="#4a6a44" stroke-width="0.4" />
<line x1="610.09" y1="527.00" x2="610.09" y2="531.30" stroke="#4a6a44" stroke-width="0.4" />
<line x1="642.27" y1="527.00" x2="642.27" y2="531.30" stroke="#4a6a44" stroke-width="0.4" />
<line x1="674.45" y1="527.00" x2="674.45" y2="531.30" stroke="#4a6a44" stroke-width="0.4" />
<line x1="706.63" y1="527.00" x2="706.63" y2="531.30" stroke="#4a6a44" stroke-width="0.4" />
<line x1="738.81" y1="527.00" x2="738.81" y2="531.30" stroke="#4a6a44" stroke-width="0.4" />
<line x1="770.99" y1="527.00" x2="770.99" y2="531.30" stroke="#4a6a44" stroke-width="0.4" />
<line x1="803.17" y1="527.00" x2="803.17" y2="531.30" stroke="#4a6a44" stroke-width="0.4" />
<line x1="835.35" y1="527.00" x2="835.35" y2="531.30" stroke="#4a6a44" stroke-width="0.4" />
<line x1="867.53" y1="527.00" x2="867.53" y2="531.30" stroke="#4a6a44" stroke-width="0.4" />
<line x1="899.71" y1="527.00" x2="899.71" y2="531.30" stroke="#4a6a44" stroke-width="0.4" />
<line x1="931.89" y1="527.00" x2="931.89" y2="531.30" stroke="#4a6a44" stroke-width="0.4" />
<line x1="964.07" y1="527.00" x2="964.07" y2="531.30" stroke="#4a6a44" stroke-width="0.4" />
<line x1="14.50" y1="540.50" x2="971.00" y2="540.50" stroke="#adadad" stroke-width="0.8" />
<circle cx="974.2" cy="540.4" r="3.25" fill="#fdfdfd" stroke="#dcdcdc" stroke-width="0.5"/>
<defs><linearGradient id="tb" x1="0" x2="1" y1="0" y2="0"><stop offset="0" stop-color="#1b1b1b"/><stop offset="0.16" stop-color="#1f1f1f"/><stop offset="0.22" stop-color="#2a2a2a"/><stop offset="0.3" stop-color="#222"/><stop offset="0.38" stop-color="#1a1a1a"/><stop offset="0.46" stop-color="#343434"/><stop offset="0.55" stop-color="#222"/><stop offset="0.6" stop-color="#1b1b1b"/><stop offset="0.68" stop-color="#383838"/><stop offset="0.8" stop-color="#363636"/><stop offset="1" stop-color="#343434"/></linearGradient></defs>
<rect x="0.00" y="546.30" width="999.00" height="15.70" fill="url(#tb)" />
<rect x="0.00" y="546.30" width="18.70" height="15.70" fill="#2a2a2a" />
<path d="M6.1 551.7l2.6-.4v2.9H6.1zM9.1 551.25l3.4-.5v3.45H9.1zM6.1 554.6h2.6v2.9l-2.6-.4zM9.1 554.6h3.4v3.45l-3.4-.5z" fill="#fff"/>
<rect x="18.90" y="546.60" width="134.20" height="15.40" fill="#f1f1f1" />
<circle cx="27.6" cy="552.8" r="1.9" fill="none" stroke="#333" stroke-width="0.55"/><path d="M26.3 554.3l-2.6 2.7" stroke="#333" stroke-width="0.6"/>
<circle cx="162.3" cy="554.1" r="2.5" fill="none" stroke="#fff" stroke-width="0.75"/>
<path d="M178.2 552.1h3.6v4.2h-3.6z" fill="none" stroke="#f0f0f0" stroke-width="0.6"/><path d="M183.3 552v1.5M183.3 554.9v1.5M178.2 551.2h1M181 551.2h0.8M178.2 557.2h1M181 557.2h0.8" stroke="#e0e0e0" stroke-width="0.6"/>
<g transform="translate(200.9 554) scale(1.1)"><circle r="3.9" fill="#e53b2c"/><path d="M0 0L-3.38 1.95A3.9 3.9 0 0 0 0 3.9A3.9 3.9 0 0 0 1.95 3.38z" fill="#2fa24f"/><path d="M0 0l-3.38-1.95a3.9 3.9 0 0 0 0 3.9z" fill="#2fa24f"/><path d="M0 0L1.95 3.38A3.9 3.9 0 0 0 3.9 0A3.9 3.9 0 0 0 3.4 -1.9H0z" fill="#fbc116"/><circle r="1.85" fill="#fff"/><circle r="1.4" fill="#4285f4"/></g>
<g transform="translate(220.2 554)"><circle r="4.35" fill="#1c78d4"/><path d="M-1-4.23A4.35 4.35 0 0 1 4.3 0.5c-.5 1-2 1.400-3.100 1.100c.8-.8.600-2.400-.9-2.900c-1-.4-2.200-.2-3 .4c.2-1.400.9-2.600 1.700-3.330z" fill="#48d083"/><path d="M-4.3 0.500c.6-1.600 2.400-2.400 4-1.900c-1.600.5-2.200 2.400-1 3.800c.8 1 2.200 1.400 3.400 1.200a4.350 4.350 0 0 1-6.400-3.100z" fill="#0d52a6"/><path d="M0.300 0.200c.2 1 1.100 1.500 2.100 1.400c.8-.1 1.500-.5 1.900-1.100c-1 .5-2.200.6-3 .3c-.5-.2-.8-.4-1-.6z" fill="#13305c"/></g>
<rect x="212.00" y="560.90" width="16.00" height="1.10" fill="#76b9ed" />
<circle cx="239" cy="554" r="4.3" fill="#4f9be6"/><circle cx="239" cy="554" r="3.3" fill="none" stroke="#bcdcf8" stroke-width="0.7" stroke-dasharray="0.7 0.8"/><circle cx="239" cy="554" r="2.1" fill="#f7a530"/>
<circle cx="258.3" cy="554" r="4.35" fill="#1f8ae0"/><path d="M255 553.6c1.2-.9 2.6 0 3.4.1s2.300-.2 3.400-1.500c-.2 1.200-1.200 2.200-2.600 2.400c-1.400.2-2.600-.6-4.200-1zM255.300 556h5.200" fill="#fff" stroke="#fff" stroke-width="0.5"/>
<circle cx="277.3" cy="554" r="4.35" fill="#10295a"/><circle cx="279" cy="552.7" r="1.45" fill="none" stroke="#fff" stroke-width="0.75"/><path d="M273.200 554.300l2.900 1.300l2-1.500" stroke="#fff" stroke-width="1.100" fill="none"/><circle cx="275.900" cy="555.900" r="1" fill="#fff"/>
<rect x="291.700" y="549.900" width="8.600" height="8.200" rx="1.200" fill="#d9262e"/><circle cx="296" cy="553.300" r="2.150" fill="#fff"/><circle cx="296" cy="553.300" r="0.900" fill="#d9262e"/><path d="M293.600 556.700h1M295.500 556.700h1M297.400 556.700h1" stroke="#fff" stroke-width="0.700"/>
<circle cx="315" cy="554" r="3.300" fill="none" stroke="#a21ff2" stroke-width="1.900"/>
<rect x="329.600" y="549.600" width="8.800" height="8.800" fill="#1e88e5"/><rect x="329.600" y="549.600" width="1.900" height="2.600" fill="#e53935"/><rect x="329.600" y="552.200" width="1.900" height="2.200" fill="#fbc02d"/><rect x="329.600" y="554.400" width="1.900" height="2" fill="#43a047"/><rect x="329.600" y="556.400" width="1.900" height="2" fill="#1565c0"/><circle cx="335.800" cy="552.100" r="1.500" fill="#fff"/><path d="M335.200 553.400l-1.700 2.300l-1.300 1.700M333.500 555.700l1.800 .8" stroke="#fff" stroke-width="1" fill="none"/>
<rect x="326.00" y="560.90" width="16.00" height="1.10" fill="#76b9ed" />
<path d="M852.5 556.6a2 2 0 0 1 .3-4a2.7 2.7 0 0 1 5-.4a2.2 2.2 0 0 1 .6 4.4z" fill="#e8f2fb"/><path d="M851.6 555.6a1.6 1.6 0 0 1 .6-3" stroke="#8ec5f2" stroke-width="0.6" fill="none"/>
<path d="M903 555.2l2.1-2.1l2.1 2.1" stroke="#fff" stroke-width="0.55" fill="none"/>
<rect x="913.6" y="551.6" width="2.8" height="5" rx="1.2" fill="none" stroke="#ddd" stroke-width="0.5"/><rect x="921.8" y="551.8" width="4.8" height="3.3" fill="none" stroke="#ddd" stroke-width="0.5"/><path d="M922.8 556.6h2.8" stroke="#ddd" stroke-width="0.5"/><path d="M930.6 553.3h1.2l1.6-1.4v4.6l-1.6-1.4h-1.2z" fill="#ddd"/><path d="M934.6 552.4c.8 1 .8 2.4 0 3.4" stroke="#ddd" stroke-width="0.4" fill="none"/>
<path d="M983.4 551.2h6.2v4.2h-3.6l-1.4 1.4v-1.4h-1.2z" fill="none" stroke="#fff" stroke-width="0.55"/><circle cx="989.8" cy="556.3" r="2.2" fill="#2a2a2a" stroke="#aaa" stroke-width="0.3"/>
</svg>
<div id="tx">
<div class="t" style="font-size:4.68px;color:#a2a2a2;transform:translate(8.75px,3.35px) rotate(0.03deg) scaleX(1.0428);">www.pingplotter.com - PingPlotter Pro</div>
<div class="t" style="font-size:4.68px;color:#2a2a2a;transform:translate(2.55px,12.05px) rotate(0.03deg) scaleX(0.9713);">File</div>
<div class="t" style="font-size:4.68px;color:#2a2a2a;transform:translate(15.25px,12.05px) rotate(0.03deg) scaleX(1.0584);">Edit</div>
<div class="t" style="font-size:4.68px;color:#2a2a2a;transform:translate(29.75px,12.05px) rotate(0.03deg) scaleX(0.9839);">Tools</div>
<div class="t" style="font-size:4.68px;color:#2a2a2a;transform:translate(46.05px,12.05px) rotate(0.03deg) scaleX(0.9938);">Summaries</div>
<div class="t" style="font-size:4.68px;color:#2a2a2a;transform:translate(74.95px,12.05px) rotate(0.03deg) scaleX(1.0035);">Workspace</div>
<div class="t" style="font-size:4.68px;color:#2a2a2a;transform:translate(103.75px,12.05px) rotate(0.03deg) scaleX(1.0962);">Help</div>
<div class="t" style="font-size:4.7px;color:#222;transform:translate(385.35px,26.37px) rotate(0.03deg) scaleX(1.0229);">Track network performance automatically and get step-by-step help narrowing down problems.</div>
<div class="t" style="font-size:4.7px;color:#1010e0;text-decoration:underline;transform:translate(586.45px,26.37px) rotate(0.03deg) scaleX(1.0317);">Try Sidekick!</div>
<div class="t" style="font-size:4.68px;color:#2a2a2a;transform:translate(10.25px,38.65px) rotate(0.03deg) scaleX(1.0159);">All Targets</div>
<div class="t" style="font-size:4.68px;color:#8a8a8a;transform:translate(43.25px,38.65px) rotate(0.03deg) scaleX(1.0538);">www.pingplotter.com</div>
<div class="t" style="font-size:4.68px;color:#222;font-weight:bold;transform:translate(3.35px,50.77px) rotate(0.03deg) scaleX(1.0208);">www.pingplotter.com</div>
<div class="t" style="font-size:4.68px;color:#222;transform:translate(52.35px,50.75px) rotate(0.03deg) scaleX(0.9853);">/ 216.92.151.75</div>
<div class="t" style="font-size:4.68px;color:#222;transform:translate(824.35px,50.85px) rotate(0.03deg) scaleX(0.9881);">Interval</div>
<div class="t" style="font-size:4.68px;color:#222;transform:translate(842.25px,51.05px) rotate(0.03deg) scaleX(0.9757);">2,5 seconds</div>
<div class="t" style="font-size:4.68px;color:#222;transform:translate(883.25px,50.85px) rotate(0.03deg) scaleX(0.9458);">Focus</div>
<div class="t" style="font-size:4.68px;color:#222;transform:translate(897.75px,51.05px) rotate(0.03deg) scaleX(1.0945);">Auto</div>
<div class="t" style="font-size:3.7px;color:#222;transform:translate(949.25px,49.70px) rotate(0.03deg) scaleX(0.9929);">100ms</div>
<div class="t" style="font-size:3.7px;color:#222;transform:translate(964.75px,49.70px) rotate(0.03deg) scaleX(1.0381);">200ms</div>
<div class="t" style="font-size:4.5px;color:#333;transform:translate(992.80px,52.60px) rotate(90deg) scaleX(0.9986) translate(-5.76px,-1.45px);">Alerts</div>
<div class="t" style="font-size:4.68px;color:#333;transform:translate(7.05px,62.75px) rotate(0.03deg) scaleX(1.0764);">Hop</div>
<div class="t" style="font-size:4.68px;color:#333;transform:translate(25.35px,62.75px) rotate(0.03deg) scaleX(1.0693);">Count</div>
<div class="t" style="font-size:4.68px;color:#333;transform:translate(182.43px,62.75px) rotate(0.03deg) scaleX(0.9400);">IP</div>
<div class="t" style="font-size:4.68px;color:#333;transform:translate(471.35px,62.75px) rotate(0.03deg) scaleX(1.0385);">Name</div>
<div class="t" style="font-size:4.68px;color:#333;transform:translate(631.95px,62.75px) rotate(0.03deg) scaleX(1.1065);">Avg</div>
<div class="t" style="font-size:4.68px;color:#333;transform:translate(649.75px,62.75px) rotate(0.03deg) scaleX(1.1310);">Min</div>
<div class="t" style="font-size:4.68px;color:#333;transform:translate(667.75px,62.75px) rotate(0.03deg) scaleX(1.0644);">Cur</div>
<div class="t" style="font-size:4.68px;color:#333;transform:translate(684.75px,62.75px) rotate(0.03deg) scaleX(0.9143);">PL%</div>
<div class="t" style="font-size:4.68px;color:#333;transform:translate(835.25px,62.35px) rotate(0.03deg) scaleX(0.9992);">Latency</div>
<div class="t" style="font-size:3.7px;color:#222;transform:translate(699.05px,63.90px) rotate(0.03deg) scaleX(1.0250);">0 ms</div>
<div class="t" style="font-size:3.7px;color:#222;transform:translate(972.75px,63.90px) rotate(0.03deg) scaleX(1.0949);">2875 ms</div>
<div class="t" style="font-size:4.68px;color:#2a2f7a;transform:translate(4.63px,71.15px) rotate(0.03deg) scaleX(0.9000);">1</div>
<div class="t" style="font-size:4.68px;color:#1a2870;transform:translate(31.65px,71.15px) rotate(0.03deg) scaleX(1.0024);">242</div>
<div class="t" style="font-size:4.68px;color:#1a2870;transform:translate(43.75px,71.15px) rotate(0.03deg) scaleX(0.9400);">192.168.0.1</div>
<div class="t" style="font-size:4.68px;color:#1a2870;transform:translate(328.75px,71.15px) rotate(0.03deg) scaleX(0.9400);">192.168.0.1</div>
<div class="t" style="font-size:4.68px;color:#1a2870;transform:translate(636.85px,71.15px) rotate(0.03deg) scaleX(0.9400);">2,1</div>
<div class="t" style="font-size:4.68px;color:#1a2870;transform:translate(654.15px,71.15px) rotate(0.03deg) scaleX(0.9400);">1,0</div>
<div class="t" style="font-size:4.68px;color:#1a2870;transform:translate(672.15px,71.15px) rotate(0.03deg) scaleX(0.9400);">1,1</div>
<div class="t" style="font-size:4.68px;color:#2a2f7a;transform:translate(4.63px,78.96px) rotate(0.03deg) scaleX(0.9000);">2</div>
<div class="t" style="font-size:4.68px;color:#1a2870;transform:translate(31.65px,78.96px) rotate(0.03deg) scaleX(1.0024);">242</div>
<div class="t" style="font-size:4.68px;color:#1a2870;transform:translate(43.75px,78.96px) rotate(0.03deg) scaleX(0.9400);">84.116.199.112</div>
<div class="t" style="font-size:4.68px;color:#1a2870;transform:translate(328.75px,78.96px) rotate(0.03deg) scaleX(0.9400);">84.116.199.112</div>
<div class="t" style="font-size:4.68px;color:#1a2870;transform:translate(631.99px,78.96px) rotate(0.03deg) scaleX(0.9400);">630,0</div>
<div class="t" style="font-size:4.68px;color:#1a2870;transform:translate(651.73px,78.96px) rotate(0.03deg) scaleX(0.9400);">57,9</div>
<div class="t" style="font-size:4.68px;color:#1a2870;transform:translate(667.29px,78.96px) rotate(0.03deg) scaleX(0.9400);">206,4</div>
<div class="t" style="font-size:4.68px;color:#1a2870;transform:translate(686.73px,78.96px) rotate(0.03deg) scaleX(0.9400);">18,6</div>
<div class="t" style="font-size:4.68px;color:#2a2f7a;transform:translate(4.63px,86.76px) rotate(0.03deg) scaleX(0.9000);">3</div>
<div class="t" style="font-size:4.68px;color:#1a2870;transform:translate(31.65px,86.76px) rotate(0.03deg) scaleX(1.0024);">242</div>
<div class="t" style="font-size:4.68px;color:#1a2870;transform:translate(43.75px,86.76px) rotate(0.03deg) scaleX(0.9400);">84.116.190.161</div>
<div class="t" style="font-size:4.68px;color:#1a2870;transform:translate(328.75px,86.76px) rotate(0.03deg) scaleX(1.0154);">de-str01c-rc1-ae-32-0.aorta.net</div>
<div class="t" style="font-size:4.68px;color:#1a2870;transform:translate(631.99px,86.76px) rotate(0.03deg) scaleX(0.9400);">628,3</div>
<div class="t" style="font-size:4.68px;color:#1a2870;transform:translate(651.73px,86.76px) rotate(0.03deg) scaleX(0.9400);">67,0</div>
<div class="t" style="font-size:4.68px;color:#1a2870;transform:translate(667.29px,86.76px) rotate(0.03deg) scaleX(0.9400);">161,8</div>
<div class="t" style="font-size:4.68px;color:#1a2870;transform:translate(686.73px,86.76px) rotate(0.03deg) scaleX(0.9400);">19,0</div>
<div class="t" style="font-size:4.68px;color:#2a2f7a;transform:translate(4.63px,94.57px) rotate(0.03deg) scaleX(0.9000);">4</div>
<div class="t" style="font-size:4.68px;color:#1a2870;transform:translate(31.65px,94.57px) rotate(0.03deg) scaleX(1.0024);">242</div>
<div class="t" style="font-size:4.68px;color:#1a2870;transform:translate(43.75px,94.57px) rotate(0.03deg) scaleX(0.9400);">84.116.140.205</div>
<div class="t" style="font-size:4.68px;color:#1a2870;transform:translate(328.75px,94.57px) rotate(0.03deg) scaleX(1.0194);">de-fra04d-rc1-ae-10-0.aorta.net</div>
<div class="t" style="font-size:4.68px;color:#1a2870;transform:translate(631.99px,94.57px) rotate(0.03deg) scaleX(0.9400);">619,3</div>
<div class="t" style="font-size:4.68px;color:#1a2870;transform:translate(651.73px,94.57px) rotate(0.03deg) scaleX(0.9400);">49,6</div>
<div class="t" style="font-size:4.68px;color:#1a2870;transform:translate(667.94px,94.57px) rotate(0.03deg) scaleX(0.9400);">111,9</div>
<div class="t" style="font-size:4.68px;color:#1a2870;transform:translate(686.73px,94.57px) rotate(0.03deg) scaleX(0.9400);">23,1</div>
<div class="t" style="font-size:4.68px;color:#2a2f7a;transform:translate(4.63px,102.37px) rotate(0.03deg) scaleX(0.9000);">5</div>
<div class="t" style="font-size:4.68px;color:#1a2870;transform:translate(31.65px,102.37px) rotate(0.03deg) scaleX(1.0024);">242</div>
<div class="t" style="font-size:4.68px;color:#1a2870;transform:translate(43.75px,102.37px) rotate(0.03deg) scaleX(0.9400);">84.116.190.94</div>
<div class="t" style="font-size:4.68px;color:#1a2870;transform:translate(328.75px,102.37px) rotate(0.03deg) scaleX(0.9400);">84.116.190.94</div>
<div class="t" style="font-size:4.68px;color:#1a2870;transform:translate(631.99px,102.37px) rotate(0.03deg) scaleX(0.9400);">605,5</div>
<div class="t" style="font-size:4.68px;color:#1a2870;transform:translate(651.73px,102.37px) rotate(0.03deg) scaleX(0.9400);">59,7</div>
<div class="t" style="font-size:4.68px;color:#1a2870;transform:translate(669.73px,102.37px) rotate(0.03deg) scaleX(0.9400);">59,7</div>
<div class="t" style="font-size:4.68px;color:#1a2870;transform:translate(686.73px,102.37px) rotate(0.03deg) scaleX(0.9400);">29,8</div>
<div class="t" style="font-size:4.68px;color:#2a2f7a;transform:translate(4.63px,110.18px) rotate(0.03deg) scaleX(0.9000);">6</div>
<div class="t" style="font-size:4.68px;color:#1a2870;transform:translate(31.65px,110.18px) rotate(0.03deg) scaleX(1.0024);">242</div>
<div class="t" style="font-size:4.68px;color:#1a2870;transform:translate(43.75px,110.18px) rotate(0.03deg) scaleX(0.9400);">195.2.18.217</div>
<div class="t" style="font-size:4.68px;color:#1a2870;transform:translate(328.75px,110.18px) rotate(0.03deg) scaleX(1.0088);">ae32-100-pcr1.fnt.cw.net</div>
<div class="t" style="font-size:4.68px;color:#1a2870;transform:translate(631.99px,110.18px) rotate(0.03deg) scaleX(0.9400);">599,5</div>
<div class="t" style="font-size:4.68px;color:#1a2870;transform:translate(651.73px,110.18px) rotate(0.03deg) scaleX(0.9400);">29,6</div>
<div class="t" style="font-size:4.68px;color:#1a2870;transform:translate(667.29px,110.18px) rotate(0.03deg) scaleX(0.9400);">346,1</div>
<div class="t" style="font-size:4.68px;color:#1a2870;transform:translate(686.73px,110.18px) rotate(0.03deg) scaleX(0.9400);">19,0</div>
<div class="t" style="font-size:4.68px;color:#2a2f7a;transform:translate(4.63px,117.98px) rotate(0.03deg) scaleX(0.9000);">7</div>
<div class="t" style="font-size:4.68px;color:#1a2870;transform:translate(31.65px,117.98px) rotate(0.03deg) scaleX(1.0024);">243</div>
<div class="t" style="font-size:4.68px;color:#1a2870;transform:translate(43.75px,117.98px) rotate(0.03deg) scaleX(0.9400);">195.2.22.238</div>
<div class="t" style="font-size:4.68px;color:#1a2870;transform:translate(328.75px,117.98px) rotate(0.03deg) scaleX(1.0363);">telia-gw.fnt.cw.net</div>
<div class="t" style="font-size:4.68px;color:#1a2870;transform:translate(631.99px,117.98px) rotate(0.03deg) scaleX(0.9400);">645,8</div>
<div class="t" style="font-size:4.68px;color:#1a2870;transform:translate(651.73px,117.98px) rotate(0.03deg) scaleX(0.9400);">51,7</div>
<div class="t" style="font-size:4.68px;color:#1a2870;transform:translate(667.29px,117.98px) rotate(0.03deg) scaleX(0.9400);">701,7</div>
<div class="t" style="font-size:4.68px;color:#1a2870;transform:translate(686.73px,117.98px) rotate(0.03deg) scaleX(0.9400);">17,3</div>
<div class="t" style="font-size:4.68px;color:#2a2f7a;transform:translate(4.63px,125.79px) rotate(0.03deg) scaleX(0.9000);">8</div>
<div class="t" style="font-size:4.68px;color:#1a2870;transform:translate(31.65px,125.79px) rotate(0.03deg) scaleX(1.0024);">243</div>
<div class="t" style="font-size:4.68px;color:#1a2870;transform:translate(43.75px,125.79px) rotate(0.03deg) scaleX(0.9400);">62.115.124.116</div>
<div class="t" style="font-size:4.68px;color:#1a2870;transform:translate(328.75px,125.79px) rotate(0.03deg) scaleX(1.0337);">ffm-bb1-link.ip.twelve99.net</div>
<div class="t" style="font-size:4.68px;color:#1a2870;transform:translate(631.99px,125.79px) rotate(0.03deg) scaleX(0.9400);">764,8</div>
<div class="t" style="font-size:4.68px;color:#1a2870;transform:translate(649.29px,125.79px) rotate(0.03deg) scaleX(0.9400);">144,0</div>
<div class="t" style="font-size:4.68px;color:#1a2870;transform:translate(667.29px,125.79px) rotate(0.03deg) scaleX(0.9400);">750,2</div>
<div class="t" style="font-size:4.68px;color:#1a2870;transform:translate(686.73px,125.79px) rotate(0.03deg) scaleX(0.9400);">16,9</div>
<div class="t" style="font-size:4.68px;color:#2a2f7a;transform:translate(4.63px,133.59px) rotate(0.03deg) scaleX(0.9000);">9</div>
<div class="t" style="font-size:4.68px;color:#1a2870;transform:translate(31.65px,133.59px) rotate(0.03deg) scaleX(1.0024);">243</div>
<div class="t" style="font-size:4.68px;color:#1a2870;transform:translate(43.75px,133.59px) rotate(0.03deg) scaleX(0.9400);">62.115.123.13</div>
<div class="t" style="font-size:4.68px;color:#1a2870;transform:translate(328.75px,133.59px) rotate(0.03deg) scaleX(1.0196);">prs-bb1-link.ip.twelve99.net</div>
<div class="t" style="font-size:4.68px;color:#1a2870;transform:translate(631.99px,133.59px) rotate(0.03deg) scaleX(0.9400);">706,7</div>
<div class="t" style="font-size:4.68px;color:#1a2870;transform:translate(649.29px,133.59px) rotate(0.03deg) scaleX(0.9400);">218,6</div>
<div class="t" style="font-size:4.68px;color:#1a2870;transform:translate(667.29px,133.59px) rotate(0.03deg) scaleX(0.9400);">702,1</div>
<div class="t" style="font-size:4.68px;color:#1a2870;transform:translate(686.73px,133.59px) rotate(0.03deg) scaleX(0.9400);">86,8</div>
<div class="t" style="font-size:4.68px;color:#2a2f7a;transform:translate(3.77px,141.40px) rotate(0.03deg) scaleX(0.9000);">10</div>
<div class="t" style="font-size:4.68px;color:#1a2870;transform:translate(31.65px,141.40px) rotate(0.03deg) scaleX(1.0024);">243</div>
<div class="t" style="font-size:4.68px;color:#1a2870;transform:translate(43.75px,141.40px) rotate(0.03deg) scaleX(0.9400);">62.115.112.242</div>
<div class="t" style="font-size:4.68px;color:#1a2870;transform:translate(328.75px,141.40px) rotate(0.03deg) scaleX(1.0133);">ash-bb2-link.ip.twelve99.net</div>
<div class="t" style="font-size:4.68px;color:#1a2870;transform:translate(631.99px,141.40px) rotate(0.03deg) scaleX(0.9400);">749,7</div>
<div class="t" style="font-size:4.68px;color:#1a2870;transform:translate(649.29px,141.40px) rotate(0.03deg) scaleX(0.9400);">146,6</div>
<div class="t" style="font-size:4.68px;color:#1a2870;transform:translate(667.29px,141.40px) rotate(0.03deg) scaleX(0.9400);">640,5</div>
<div class="t" style="font-size:4.68px;color:#1a2870;transform:translate(686.73px,141.40px) rotate(0.03deg) scaleX(0.9400);">16,0</div>
<div class="t" style="font-size:4.68px;color:#2a2f7a;transform:translate(3.92px,149.20px) rotate(0.03deg) scaleX(0.9000);">11</div>
<div class="t" style="font-size:4.68px;color:#1a2870;transform:translate(31.65px,149.20px) rotate(0.03deg) scaleX(1.0024);">243</div>
<div class="t" style="font-size:4.68px;color:#1a2870;transform:translate(43.75px,149.20px) rotate(0.03deg) scaleX(0.9400);">62.115.142.225</div>
<div class="t" style="font-size:4.68px;color:#1a2870;transform:translate(328.75px,149.20px) rotate(0.03deg) scaleX(1.0308);">pitt-b2-link.ip.twelve99.net</div>
<div class="t" style="font-size:4.68px;color:#1a2870;transform:translate(631.99px,149.20px) rotate(0.03deg) scaleX(0.9400);">768,1</div>
<div class="t" style="font-size:4.68px;color:#1a2870;transform:translate(649.29px,149.20px) rotate(0.03deg) scaleX(0.9400);">167,3</div>
<div class="t" style="font-size:4.68px;color:#1a2870;transform:translate(667.29px,149.20px) rotate(0.03deg) scaleX(0.9400);">601,5</div>
<div class="t" style="font-size:4.68px;color:#1a2870;transform:translate(686.73px,149.20px) rotate(0.03deg) scaleX(0.9400);">16,5</div>
<div class="t" style="font-size:4.68px;color:#2a2f7a;transform:translate(3.77px,157.01px) rotate(0.03deg) scaleX(0.9000);">12</div>
<div class="t" style="font-size:4.68px;color:#1a2870;transform:translate(31.65px,157.01px) rotate(0.03deg) scaleX(1.0024);">243</div>
<div class="t" style="font-size:4.68px;color:#1a2870;transform:translate(43.75px,157.01px) rotate(0.03deg) scaleX(0.9400);">62.115.61.251</div>
<div class="t" style="font-size:4.68px;color:#1a2870;transform:translate(328.75px,157.01px) rotate(0.03deg) scaleX(1.0118);">capcon-ic331908-pitt-b2.ip.twelve99-cust.net</div>
<div class="t" style="font-size:4.68px;color:#1a2870;transform:translate(631.99px,157.01px) rotate(0.03deg) scaleX(0.9400);">746,5</div>
<div class="t" style="font-size:4.68px;color:#1a2870;transform:translate(649.29px,157.01px) rotate(0.03deg) scaleX(0.9400);">135,7</div>
<div class="t" style="font-size:4.68px;color:#1a2870;transform:translate(667.29px,157.01px) rotate(0.03deg) scaleX(0.9400);">548,0</div>
<div class="t" style="font-size:4.68px;color:#1a2870;transform:translate(686.73px,157.01px) rotate(0.03deg) scaleX(0.9400);">17,3</div>
<div class="t" style="font-size:4.68px;color:#1a2870;transform:translate(43.75px,164.81px) rotate(0.03deg) scaleX(0.9400);">-</div>
<div class="t" style="font-size:4.68px;color:#1a2870;transform:translate(676.55px,164.81px) rotate(0.03deg) scaleX(0.9400);">*</div>
<div class="t" style="font-size:4.68px;color:#1a2870;transform:translate(684.29px,164.81px) rotate(0.03deg) scaleX(0.9400);">100,0</div>
<div class="t" style="font-size:4.68px;color:#2a2f7a;transform:translate(3.77px,172.62px) rotate(0.03deg) scaleX(0.9000);">14</div>
<div class="t" style="font-size:4.68px;color:#1a2870;transform:translate(31.65px,172.62px) rotate(0.03deg) scaleX(1.0024);">243</div>
<div class="t" style="font-size:4.68px;color:#1a2870;transform:translate(43.75px,172.62px) rotate(0.03deg) scaleX(0.9400);">216.92.151.75</div>
<div class="t" style="font-size:4.68px;color:#1a2870;transform:translate(328.75px,172.62px) rotate(0.03deg) scaleX(1.0514);">www.pingplotter.com</div>
<div class="t" style="font-size:4.68px;color:#1a2870;transform:translate(631.99px,172.62px) rotate(0.03deg) scaleX(0.9400);">748,8</div>
<div class="t" style="font-size:4.68px;color:#1a2870;transform:translate(649.29px,172.62px) rotate(0.03deg) scaleX(0.9400);">140,0</div>
<div class="t" style="font-size:4.68px;color:#1a2870;transform:translate(667.29px,172.62px) rotate(0.03deg) scaleX(0.9400);">319,3</div>
<div class="t" style="font-size:4.68px;color:#1a2870;transform:translate(686.73px,172.62px) rotate(0.03deg) scaleX(0.9400);">17,7</div>
<div class="t" style="font-size:4.68px;color:#1a2870;transform:translate(31.65px,180.05px) rotate(0.03deg) scaleX(1.0024);">243</div>
<div class="t" style="font-size:4.68px;color:#1a2870;font-weight:bold;transform:translate(589.15px,180.07px) rotate(0.03deg) scaleX(1.0083);">Round Trip (ms)</div>
<div class="t" style="font-size:4.68px;color:#1a2870;transform:translate(631.99px,180.05px) rotate(0.03deg) scaleX(0.9400);">748,8</div>
<div class="t" style="font-size:4.68px;color:#1a2870;transform:translate(649.29px,180.05px) rotate(0.03deg) scaleX(0.9400);">140,0</div>
<div class="t" style="font-size:4.68px;color:#1a2870;transform:translate(667.29px,180.05px) rotate(0.03deg) scaleX(0.9400);">319,3</div>
<div class="t" style="font-size:4.68px;color:#1a2870;transform:translate(686.73px,180.05px) rotate(0.03deg) scaleX(0.9400);">17,7</div>
<div class="t" style="font-size:4.68px;color:#1a2870;transform:translate(933.15px,180.05px) rotate(0.03deg) scaleX(0.9696);">Focus: 20:40:11 - 20:50:11</div>
<div class="t" style="font-size:4.3px;color:#474747;transform:translate(11.75px,300.15px) rotate(0.03deg) scaleX(1.0026);">www.pingplotter.com (216.92.151.75) hop 14</div>
<div class="t" style="font-size:4.3px;color:#474747;transform:translate(911.45px,300.15px) rotate(0.03deg) scaleX(0.9722);">10 minutes (20:40:11 - 20:50:11)</div>
<div class="t" style="font-size:4.2px;color:#c83c3c;transform:translate(6.25px,307.10px) rotate(0.03deg) scaleX(1.0702);">35</div>
<div class="t" style="font-size:3.4px;color:#b03030;transform:translate(486.65px,306.71px) rotate(0.03deg) scaleX(1.0678);">Jitter (ms)</div>
<div class="t" style="font-size:4.1px;color:#e4b3b0;transform:translate(12.95px,491.23px) rotate(0.03deg) scaleX(0.9674);">500 ms</div>
<div class="t" style="font-size:4.1px;color:#e4b3b0;transform:translate(12.95px,454.72px) rotate(0.03deg) scaleX(0.9871);">1000 ms</div>
<div class="t" style="font-size:4.1px;color:#e4b3b0;transform:translate(12.95px,418.22px) rotate(0.03deg) scaleX(0.9871);">1500 ms</div>
<div class="t" style="font-size:4.1px;color:#e4b3b0;transform:translate(12.95px,381.71px) rotate(0.03deg) scaleX(0.9871);">2000 ms</div>
<div class="t" style="font-size:4.1px;color:#e4b3b0;transform:translate(12.95px,345.21px) rotate(0.03deg) scaleX(0.9871);">2500 ms</div>
<div class="t" style="font-size:4.2px;color:#333;transform:translate(1.75px,316.10px) rotate(0.03deg) scaleX(1.0184);">2890</div>
<div class="t" style="font-size:4.2px;color:#333;transform:translate(8.65px,522.50px) rotate(0.03deg) scaleX(0.9400);">0</div>
<div class="t" style="font-size:4.2px;color:#585858;transform:translate(8.70px,421.50px) rotate(-90deg) scaleX(0.9709) translate(-12.10px,-1.50px);">Latency (ms)</div>
<div class="t" style="font-size:4.2px;color:#c02020;transform:translate(978.05px,316.80px) rotate(0.03deg) scaleX(1.2201);">30</div>
<div class="t" style="font-size:4.0px;color:#b4283a;transform:translate(980.40px,425.00px) rotate(90deg) scaleX(0.9823) translate(-13.23px,-1.59px);">Packet Loss %</div>
<div class="t" style="font-size:4.2px;color:#3f5f3c;transform:translate(25.25px,528.20px) rotate(0.03deg) scaleX(0.9870);">20:40:20</div>
<div class="t" style="font-size:4.2px;color:#3f5f3c;transform:translate(57.43px,528.20px) rotate(0.03deg) scaleX(0.9870);">20:40:40</div>
<div class="t" style="font-size:4.2px;color:#3f5f3c;transform:translate(89.61px,528.20px) rotate(0.03deg) scaleX(0.9870);">20:41:00</div>
<div class="t" style="font-size:4.2px;color:#3f5f3c;transform:translate(121.79px,528.20px) rotate(0.03deg) scaleX(0.9870);">20:41:20</div>
<div class="t" style="font-size:4.2px;color:#3f5f3c;transform:translate(153.97px,528.20px) rotate(0.03deg) scaleX(0.9870);">20:41:40</div>
<div class="t" style="font-size:4.2px;color:#3f5f3c;transform:translate(186.15px,528.20px) rotate(0.03deg) scaleX(0.9870);">20:42:00</div>
<div class="t" style="font-size:4.2px;color:#3f5f3c;transform:translate(218.33px,528.20px) rotate(0.03deg) scaleX(0.9870);">20:42:20</div>
<div class="t" style="font-size:4.2px;color:#3f5f3c;transform:translate(250.51px,528.20px) rotate(0.03deg) scaleX(0.9870);">20:42:40</div>
<div class="t" style="font-size:4.2px;color:#3f5f3c;transform:translate(282.69px,528.20px) rotate(0.03deg) scaleX(0.9870);">20:43:00</div>
<div class="t" style="font-size:4.2px;color:#3f5f3c;transform:translate(314.87px,528.20px) rotate(0.03deg) scaleX(0.9870);">20:43:20</div>
<div class="t" style="font-size:4.2px;color:#3f5f3c;transform:translate(347.05px,528.20px) rotate(0.03deg) scaleX(0.9870);">20:43:40</div>
<div class="t" style="font-size:4.2px;color:#3f5f3c;transform:translate(379.23px,528.20px) rotate(0.03deg) scaleX(0.9870);">20:44:00</div>
<div class="t" style="font-size:4.2px;color:#3f5f3c;transform:translate(411.41px,528.20px) rotate(0.03deg) scaleX(0.9870);">20:44:20</div>
<div class="t" style="font-size:4.2px;color:#3f5f3c;transform:translate(443.59px,528.20px) rotate(0.03deg) scaleX(0.9870);">20:44:40</div>
<div class="t" style="font-size:4.2px;color:#3f5f3c;transform:translate(475.77px,528.20px) rotate(0.03deg) scaleX(0.9870);">20:45:00</div>
<div class="t" style="font-size:4.2px;color:#3f5f3c;transform:translate(507.95px,528.20px) rotate(0.03deg) scaleX(0.9870);">20:45:20</div>
<div class="t" style="font-size:4.2px;color:#3f5f3c;transform:translate(540.13px,528.20px) rotate(0.03deg) scaleX(0.9870);">20:45:40</div>
<div class="t" style="font-size:4.2px;color:#3f5f3c;transform:translate(572.31px,528.20px) rotate(0.03deg) scaleX(0.9870);">20:46:00</div>
<div class="t" style="font-size:4.2px;color:#3f5f3c;transform:translate(604.49px,528.20px) rotate(0.03deg) scaleX(0.9870);">20:46:20</div>
<div class="t" style="font-size:4.2px;color:#3f5f3c;transform:translate(636.67px,528.20px) rotate(0.03deg) scaleX(0.9870);">20:46:40</div>
<div class="t" style="font-size:4.2px;color:#3f5f3c;transform:translate(668.85px,528.20px) rotate(0.03deg) scaleX(0.9870);">20:47:00</div>
<div class="t" style="font-size:4.2px;color:#3f5f3c;transform:translate(701.03px,528.20px) rotate(0.03deg) scaleX(0.9870);">20:47:20</div>
<div class="t" style="font-size:4.2px;color:#3f5f3c;transform:translate(733.21px,528.20px) rotate(0.03deg) scaleX(0.9870);">20:47:40</div>
<div class="t" style="font-size:4.2px;color:#3f5f3c;transform:translate(765.39px,528.20px) rotate(0.03deg) scaleX(0.9870);">20:48:00</div>
<div class="t" style="font-size:4.2px;color:#3f5f3c;transform:translate(797.57px,528.20px) rotate(0.03deg) scaleX(0.9870);">20:48:20</div>
<div class="t" style="font-size:4.2px;color:#3f5f3c;transform:translate(829.75px,528.20px) rotate(0.03deg) scaleX(0.9870);">20:48:40</div>
<div class="t" style="font-size:4.2px;color:#3f5f3c;transform:translate(861.93px,528.20px) rotate(0.03deg) scaleX(0.9870);">20:49:00</div>
<div class="t" style="font-size:4.2px;color:#3f5f3c;transform:translate(894.11px,528.20px) rotate(0.03deg) scaleX(0.9870);">20:49:20</div>
<div class="t" style="font-size:4.2px;color:#3f5f3c;transform:translate(926.29px,528.20px) rotate(0.03deg) scaleX(0.9870);">20:49:40</div>
<div class="t" style="font-size:4.2px;color:#3f5f3c;transform:translate(958.47px,528.20px) rotate(0.03deg) scaleX(0.9870);">20:50:00</div>
<div class="t" style="font-size:5.0px;color:#4c4c4c;transform:translate(34.05px,552.23px) rotate(0.03deg) scaleX(1.1528);">Zur Suche Text hier eingeben</div>
<div class="t" style="font-size:4.7px;color:#fff;transform:translate(863.25px,553.17px) rotate(0.03deg) scaleX(1.0969);">15°C</div>
<div class="t" style="font-size:4.7px;color:#fff;transform:translate(877.35px,553.17px) rotate(0.03deg) scaleX(1.2118);">Bewölkt</div>
<div class="t" style="font-size:4.6px;color:#fff;transform:translate(940.75px,553.09px) rotate(0.03deg) scaleX(0.9997);">DEU</div>
<div class="t" style="font-size:4.6px;color:#fff;transform:translate(959.25px,549.79px) rotate(0.03deg) scaleX(1.0870);">20:50</div>
<div class="t" style="font-size:4.6px;color:#fff;transform:translate(954.30px,556.29px) rotate(0.03deg) scaleX(0.9565);">21.09.2021</div>
<div class="t" style="font-size:3.2px;color:#fff;transform:translate(988.20px,555.55px) rotate(0.03deg) scaleX(0.9000);">22</div>
</div>
</body></html>
